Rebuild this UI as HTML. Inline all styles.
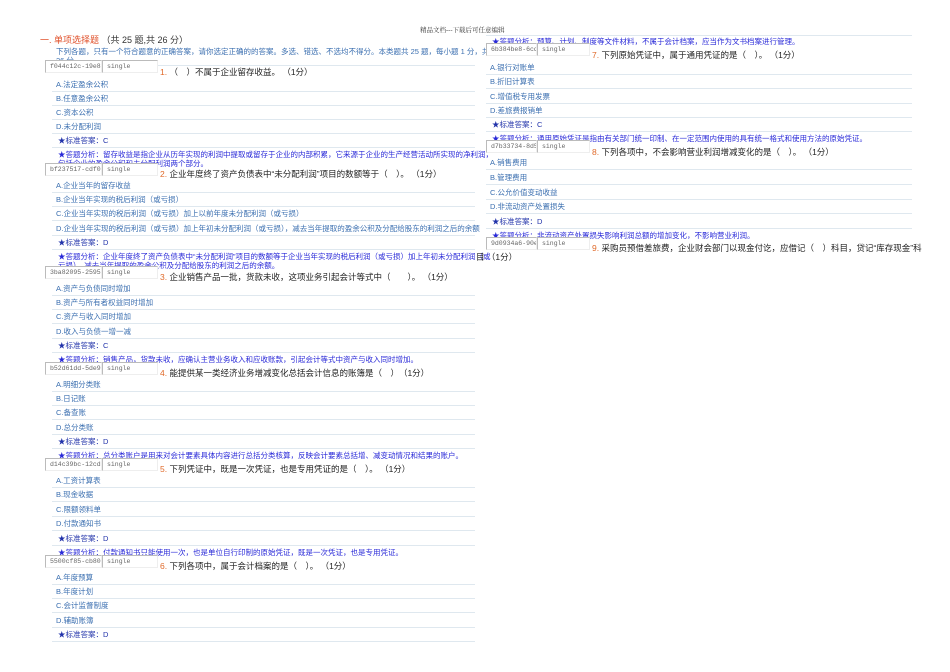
<!DOCTYPE html>
<html><head><meta charset="utf-8"><style>
body{margin:0;width:950px;height:672px;background:#fff;position:relative;overflow:hidden;font-family:"Liberation Sans","Noto Sans CJK SC",sans-serif;}
div{position:absolute;white-space:nowrap;}
.r{height:14px;line-height:14px;border-bottom:1px solid #dfe8ef;font-size:7.5px;color:#3b6fb0;padding-left:4px;box-sizing:border-box;}
.L{left:52px;width:423px}
.R{left:486px;width:426px}
.ans{color:#2233aa;padding-left:6px}
.an{color:#2a2ad8;padding-left:6px;border-bottom:none;overflow:visible}
.b{height:13px;background:#fff;border:1px solid #bbb;border-right-color:#eee;border-bottom-color:#eee;font-family:"Liberation Mono",monospace;font-size:6.5px;color:#666;line-height:12px;padding-left:4px;box-sizing:border-box;overflow:hidden}
.q{font-size:8.5px;color:#222;line-height:12px}
.q span{color:#e06a2a}
</style></head><body>
<div style="left:420px;top:25px;font-family:'Liberation Serif','Noto Serif CJK SC',serif;font-size:6.5px;color:#333">精品文档---下载后可任意编辑</div>

<div style="left:40px;top:33px;font-size:9px;color:#e0502a">一. 单项选择题 <span style="color:#333">（共 25 题,共 26 分）</span></div>
<div style="left:56px;top:46px;font-size:7.5px;color:#3b6fb0">下列各题，只有一个符合题意的正确答案，请你选定正确的的答案。多选、错选、不选均不得分。本类题共 25 题，每小题 1 分，共</div>
<div style="left:56px;top:55px;font-size:7.5px;color:#3b6fb0">26 分。</div>

<!-- Q1 -->
<div class="r L" style="top:53px;height:13px"></div>
<div class="b" style="left:45px;top:60px;width:57px">f044c12c-19e8-</div>
<div class="b" style="left:102px;top:60px;width:56px">single</div>
<div class="q" style="left:160px;top:66px"><span>1.</span> （　）不属于企业留存收益。 （1分）</div>
<div class="r L" style="top:78px">A.法定盈余公积</div>
<div class="r L" style="top:92px">B.任意盈余公积</div>
<div class="r L" style="top:106px">C.资本公积</div>
<div class="r L" style="top:120px">D.未分配利润</div>
<div class="r L ans" style="top:134px">★标准答案：C</div>
<div class="r L an" style="top:148px">★答题分析：留存收益是指企业从历年实现的利润中提取或留存于企业的内部积累，它来源于企业的生产经营活动所实现的净利润，</div>
<div class="r L an" style="top:157px">包括企业的盈余公积和未分配利润两个部分。</div>

<!-- Q2 -->
<div class="b" style="left:45px;top:163px;width:57px">bf237517-cdf0-</div>
<div class="b" style="left:102px;top:163px;width:56px">single</div>
<div class="q" style="left:160px;top:168px"><span>2.</span> 企业年度终了资产负债表中“未分配利润”项目的数额等于（　）。 （1分）</div>
<div class="r L" style="top:179px">A.企业当年的留存收益</div>
<div class="r L" style="top:193px">B.企业当年实现的税后利润（或亏损）</div>
<div class="r L" style="top:207px">C.企业当年实现的税后利润（或亏损）加上以前年度未分配利润（或亏损）</div>
<div class="r L" style="top:222px">D.企业当年实现的税后利润（或亏损）加上年初未分配利润（或亏损），减去当年提取的盈余公积及分配给股东的利润之后的余额</div>
<div class="r L ans" style="top:236px">★标准答案：D</div>
<div class="r L an" style="top:250px">★答题分析：企业年度终了资产负债表中“未分配利润”项目的数额等于企业当年实现的税后利润（或亏损）加上年初未分配利润（或</div>
<div class="r L an" style="top:259px">亏损），减去当年提取的盈余公积及分配给股东的利润之后的余额。</div>

<!-- Q3 -->
<div class="b" style="left:45px;top:266px;width:57px">3ba82095-2595-</div>
<div class="b" style="left:102px;top:266px;width:56px">single</div>
<div class="q" style="left:160px;top:271px"><span>3.</span> 企业销售产品一批，货款未收，这项业务引起会计等式中（　　）。 （1分）</div>
<div class="r L" style="top:282px">A.资产与负债同时增加</div>
<div class="r L" style="top:296px">B.资产与所有者权益同时增加</div>
<div class="r L" style="top:310px">C.资产与收入同时增加</div>
<div class="r L" style="top:325px">D.收入与负债一增一减</div>
<div class="r L ans" style="top:339px">★标准答案：C</div>
<div class="r L an" style="top:353px">★答题分析：销售产品，货款未收，应确认主营业务收入和应收账款，引起会计等式中资产与收入同时增加。</div>

<!-- Q4 -->
<div class="b" style="left:45px;top:362px;width:57px">b52d61dd-5de9-</div>
<div class="b" style="left:102px;top:362px;width:56px">single</div>
<div class="q" style="left:160px;top:367px"><span>4.</span> 能提供某一类经济业务增减变化总括会计信息的账簿是（　）　（1分）</div>
<div class="r L" style="top:378px">A.明细分类账</div>
<div class="r L" style="top:392px">B.日记账</div>
<div class="r L" style="top:406px">C.备查账</div>
<div class="r L" style="top:421px">D.总分类账</div>
<div class="r L ans" style="top:435px">★标准答案：D</div>
<div class="r L an" style="top:449px">★答题分析：总分类账户是用来对会计要素具体内容进行总括分类核算，反映会计要素总括增、减变动情况和结果的账户。</div>

<!-- Q5 -->
<div class="b" style="left:45px;top:458px;width:57px">d14c39bc-12cd-</div>
<div class="b" style="left:102px;top:458px;width:56px">single</div>
<div class="q" style="left:160px;top:463px"><span>5.</span> 下列凭证中，既是一次凭证，也是专用凭证的是（　）。 （1分）</div>
<div class="r L" style="top:474px">A.工资计算表</div>
<div class="r L" style="top:488px">B.现金收据</div>
<div class="r L" style="top:503px">C.限额领料单</div>
<div class="r L" style="top:517px">D.付款通知书</div>
<div class="r L ans" style="top:532px">★标准答案：D</div>
<div class="r L an" style="top:546px">★答题分析：付款通知书只能使用一次，也是单位自行印制的原始凭证，既是一次凭证，也是专用凭证。</div>

<!-- Q6 -->
<div class="b" style="left:45px;top:555px;width:57px">5500cf85-cb80-</div>
<div class="b" style="left:102px;top:555px;width:56px">single</div>
<div class="q" style="left:160px;top:560px"><span>6.</span> 下列各项中，属于会计档案的是（　）。 （1分）</div>
<div class="r L" style="top:571px">A.年度预算</div>
<div class="r L" style="top:585px">B.年度计划</div>
<div class="r L" style="top:599px">C.会计监督制度</div>
<div class="r L" style="top:614px">D.辅助账簿</div>
<div class="r L ans" style="top:628px">★标准答案：D</div>

<!-- right column -->
<div class="r R" style="top:30px;height:6px"></div>
<div class="r R an" style="top:35px">★答题分析：预算、计划、制度等文件材料，不属于会计档案，应当作为文书档案进行管理。</div>
<div class="b" style="left:486px;top:43px;width:51px">6b384be8-6cdf-</div>
<div class="b" style="left:537px;top:43px;width:53px">single</div>
<div class="q" style="left:592px;top:49px"><span>7.</span> 下列原始凭证中，属于通用凭证的是（　）。 （1分）</div>
<div class="r R" style="top:61px">A.银行对账单</div>
<div class="r R" style="top:75px">B.折旧计算表</div>
<div class="r R" style="top:90px">C.增值税专用发票</div>
<div class="r R" style="top:104px">D.差旅费报销单</div>
<div class="r R ans" style="top:118px">★标准答案：C</div>
<div class="r R an" style="top:132px">★答题分析：通用原始凭证是指由有关部门统一印制、在一定范围内使用的具有统一格式和使用方法的原始凭证。</div>
<div class="b" style="left:486px;top:140px;width:51px">d7b33734-8d53-</div>
<div class="b" style="left:537px;top:140px;width:53px">single</div>
<div class="q" style="left:592px;top:146px"><span>8.</span> 下列各项中，不会影响营业利润增减变化的是（　）。 （1分）</div>
<div class="r R" style="top:156px">A.销售费用</div>
<div class="r R" style="top:171px">B.管理费用</div>
<div class="r R" style="top:186px">C.公允价值变动收益</div>
<div class="r R" style="top:200px">D.非流动资产处置损失</div>
<div class="r R ans" style="top:215px">★标准答案：D</div>
<div class="r R an" style="top:229px">★答题分析：非流动资产处置损失影响利润总额的增加变化，不影响营业利润。</div>
<div class="b" style="left:486px;top:237px;width:51px">9d0934a6-90ea-</div>
<div class="b" style="left:537px;top:237px;width:53px">single</div>
<div class="q" style="left:592px;top:242px"><span>9.</span> 采购员预借差旅费，企业财会部门以现金付讫，应借记（　）科目，贷记“库存现金”科</div>
<div class="q" style="left:476px;top:251px">目 （1分）</div>
</body></html>
